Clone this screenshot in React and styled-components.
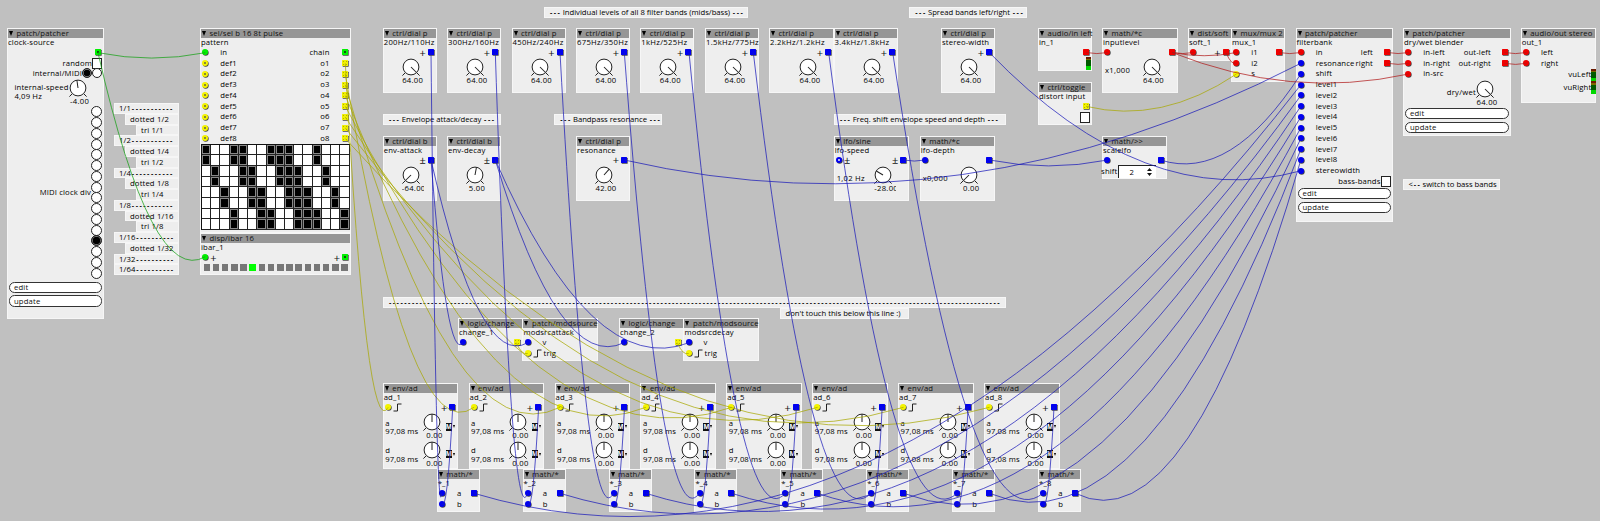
import React from "react";
import styled, { createGlobalStyle, css } from "styled-components";

const Page = createGlobalStyle`
  html, body { margin: 0; background: #c0c0c0; overflow: hidden; }
`;

const HUES = {
  red: { main: "#f00000", wire: "#b01818" },
  blue: { main: "#0000f0", wire: "#1818b8" },
  yellow: { main: "#f4f400", wire: "#a8a800" },
  green: { main: "#00f000", wire: "#10a010" },
};

const Canvas = styled.main`
  position: relative;
  width: 1600px;
  height: 521px;
  overflow: hidden;
  background: #c0c0c0;
  color: #000;
  font: 500 7.7px/9px "Open Sans", "Noto Sans", sans-serif;
  letter-spacing: 0.15px;
  white-space: nowrap;
`;

const Frame = styled.section`
  position: absolute;
  left: ${(p) => p.$x}px;
  top: ${(p) => p.$y}px;
  width: ${(p) => p.$w}px;
  height: ${(p) => p.$h}px;
  box-sizing: border-box;
  border: 1px solid #f6f6f6;
  background: #eeeeee;
  display: flex;
  flex-direction: column;
`;

const Title = styled.header`
  flex: none;
  height: 9.4px;
  display: flex;
  align-items: center;
  gap: 3.5px;
  padding-left: 1px;
  background: #969696;
  color: #111;
`;

const Caret = styled.i`
  flex: none;
  width: 0;
  height: 0;
  border: solid transparent;
  border-width: 5px 2.5px 0;
  border-top-color: #000;
`;

const Name = styled.div`
  flex: none;
  height: 8.7px;
  line-height: 9px;
  letter-spacing: ${(p) => p.$track ?? 0.15}px;
`;

const Row = styled.div`
  flex: none;
  height: 10.75px;
  display: flex;
  align-items: center;
  justify-content: space-between;
  padding: 0 2px 0 0.5px;
`;

const Side = styled.span`
  display: flex;
  align-items: center;
  gap: ${(p) => p.$gap ?? 12}px;
`;

const Port = styled.i`
  flex: none;
  box-sizing: border-box;
  width: 6px;
  height: 6px;
  background: ${(p) => HUES[p.$hue].main};
  box-shadow: 0.7px 0.7px 0 #444;
  border-radius: ${(p) => (p.$out ? "0.5px" : "50%")};
  ${(p) =>
    p.$out &&
    p.$hue === "yellow" &&
    css`
      background: radial-gradient(circle, #b0b000 0.6px, #f0f000 0.9px) 0 0 / 3px 3px;
    `}
  ${(p) =>
    p.$open &&
    css`
      border: 2px solid ${HUES[p.$hue].main};
      background: ${p.$out ? "#105010" : p.$hue === "yellow" ? "#666640" : "#eee"};
    `}
`;

const Sign = styled.b`
  font: 11px/9px "Open Sans", sans-serif;
  color: #111;
  letter-spacing: 0;
`;

const Note = styled.div`
  position: absolute;
  left: ${(p) => p.$x}px;
  top: ${(p) => p.$y}px;
  width: ${(p) => p.$w}px;
  height: 11px;
  box-sizing: border-box;
  padding-left: 4.5px;
  line-height: 9px;
  border: 1px solid #f6f6f6;
  background: #eeeeee;
  letter-spacing: -0.02px;
`;

const Dashes = styled.span`
  font: bold 6.385px/1 "Liberation Mono", monospace;
  letter-spacing: 0;
`;

const DivisionList = styled.div`
  position: absolute;
  left: 114px;
  top: 103px;
  width: 65px;
  display: flex;
  flex-direction: column;
  align-items: stretch;
`;

const Division = styled.div`
  height: 10.75px;
  box-sizing: border-box;
  margin-left: ${(p) => p.$level * 11}px;
  padding-left: 4px;
  line-height: 9px;
  border: 1px solid #f6f6f6;
  background: #eeeeee;
`;

const DialBox = styled.div`
  flex: none;
  width: 24px;
  height: 27px;
  display: flex;
  flex-direction: column;
`;

const Value = styled.span`
  width: 22px;
  margin-left: 3px;
  text-align: center;
  line-height: 9px;
  overflow: hidden;
  letter-spacing: 0.3px;
`;

const ControlRow = styled.div`
  flex: none;
  display: flex;
  align-items: flex-start;
  justify-content: flex-end;
  padding: 0.6px ${(p) => p.$right ?? 13}px 0 2px;
`;

const Reading = styled.span`
  margin: 8px auto 0 0;
  letter-spacing: 0.25px;
`;

const Button = styled.button`
  flex: none;
  display: block;
  height: 11.3px;
  margin: 0 1px 2.4px;
  padding: 0 0 0 4px;
  box-sizing: border-box;
  border: 1px solid #333;
  border-radius: 5.5px;
  background: #fff;
  color: #111;
  font: inherit;
  letter-spacing: inherit;
  text-align: left;
`;

const Actions = styled.div`
  display: flex;
  flex-direction: column;
  margin-top: ${(p) => p.$top}px;
`;

const Check = styled.span`
  flex: none;
  box-sizing: border-box;
  width: 10px;
  height: 11px;
  border: 1px solid #222;
  background: #fff;
`;

const Radio = styled.i`
  flex: none;
  box-sizing: border-box;
  width: ${(p) => p.$size ?? 11}px;
  height: ${(p) => p.$size ?? 11}px;
  border: 1px solid #222;
  border-radius: 50%;
  background: ${(p) => (p.$on ? "#000" : "#fff")};
  box-shadow: ${(p) => (p.$on ? "inset 0 0 0 0.7px #999" : "none")};
`;

const Field = styled.div`
  flex: none;
  display: flex;
  align-items: center;
  justify-content: flex-end;
  height: ${(p) => p.$h ?? 10.75}px;
  padding-right: ${(p) => p.$right ?? 1}px;
`;

const RadioColumn = styled.div`
  display: grid;
  grid-auto-rows: 10.755px;
  place-items: center;
`;

const SpeedText = styled.div`
  display: flex;
  flex-direction: column;
  margin: 4.5px -3px 0 0;
`;

const Steps = styled.div`
  display: grid;
  grid-template-columns: repeat(16, 1fr);
  grid-auto-rows: 10.65px;
  width: 148.5px;
  border: solid #111;
  border-width: 1px 0 0 1px;
  box-sizing: border-box;
`;

const Step = styled.i`
  border: solid #222;
  border-width: 0 1px 1px 0;
  background: ${(p) => (p.$on ? "#000" : "#fff")};
  box-shadow: ${(p) => (p.$on ? "inset 0 0 0 1px #888" : "none")};
`;

const Bar = styled.div`
  display: flex;
  gap: 2.7px;
  padding: 1.2px 0 0 2.5px;
`;

const Lamp = styled.i`
  width: 6.5px;
  height: 7px;
  background: ${(p) => (p.$on ? "#00ff00" : "#777")};
`;

const Meter = styled.i`
  flex: none;
  width: 5px;
  height: 12.6px;
  margin-right: ${(p) => (p.$flush ? -1 : 0)}px;
  background: linear-gradient(#6a1a00 0 2px, #7a6a00 2px 3.5px, #005a00 3.5px 9px, #00d800 9px);
`;

const EnvParam = styled.div`
  flex: none;
  height: 27.75px;
  padding-top: 0.5px;
  box-sizing: border-box;
  display: grid;
  grid-template-columns: 36.8px 24px 1fr;
`;

const EnvText = styled.div`
  display: flex;
  flex-direction: column;
  padding: 5.2px 0 0 1.5px;
  line-height: 8.5px;
  letter-spacing: 0.1px;
`;

const Mod = styled.div`
  display: flex;
  align-items: center;
  gap: 1px;
  margin: 9.4px 0 0 1.3px;
  height: 8px;
`;

const ModKey = styled.b`
  width: 6px;
  height: 8px;
  background: #111;
  color: #fff;
  font: bold 6.5px/8px "Open Sans", sans-serif;
  letter-spacing: 0;
  text-align: center;
`;

const ModCaret = styled(Caret)`
  border-width: 3px 1.7px 0;
`;

const Spinner = styled.div`
  flex: none;
  display: flex;
  align-items: center;
  justify-content: space-between;
  box-sizing: border-box;
  width: 38.5px;
  height: 13px;
  margin-right: 9px;
  padding: 0 3px 0 11px;
  border: solid #222;
  border-width: 1px 0 0 1px;
  background: #fff;
`;

const Wires = styled.svg`
  position: absolute;
  inset: 0;
  pointer-events: none;
  fill: none;
  stroke-width: 1;
`;

function Dial({ value, angle }) {
  return (
    <DialBox>
      <svg width="24" height="18" viewBox="0 0 24 18" fill="none" stroke="#222" strokeWidth="1">
        <path d="M6.3 14.7L3.4 17.6M17.7 14.7L20.6 17.6" />
        <circle cx="12" cy="9" r="7.9" fill="#fff" />
        <path d="M12 9V1.2" transform={`rotate(${angle} 12 9)`} />
      </svg>
      <Value>{value}</Value>
    </DialBox>
  );
}

function StepGlyph() {
  return (
    <svg width="9" height="9" viewBox="0 0 9 9" fill="none" stroke="#222">
      <path d="M0.5 8H4.5V1H8.5" />
    </svg>
  );
}

// Runs of hyphens are ruled lines, so they get fixed-width dashes.
function Ruled({ text }) {
  return text
    .split(/(-{2,})/)
    .map((part, i) => (i % 2 ? <Dashes key={i}>{part}</Dashes> : part));
}

function Node({ x, y = 28, w, h, type, name, track, children }) {
  return (
    <Frame $x={x} $y={y} $w={w} $h={h}>
      <Title>
        <Caret />
        {type}
      </Title>
      <Name $track={track}>{name}</Name>
      {children}
    </Frame>
  );
}

function In({ hue, label, open, sign, step }) {
  return (
    <Side $gap={sign || step ? 2 : 12}>
      <Port $hue={hue} $open={open} style={{ marginLeft: 0.7 }} />
      {sign && <Sign>{sign}</Sign>}
      {step && <StepGlyph />}
      {label && <span>{label}</span>}
    </Side>
  );
}

function Out({ hue, label, open, sign, gap = 10.5 }) {
  return (
    <Side $gap={sign ? 2 : gap}>
      {label && <span>{label}</span>}
      {sign && <Sign>{sign}</Sign>}
      <Port $hue={hue} $open={open} $out />
    </Side>
  );
}

const Empty = () => <span />;

function DialNode({ x, y, w = 54, type = "ctrl/dial p", name, track, value = "64.00", angle = 135, sign = "+" }) {
  return (
    <Node x={x} y={y} w={w} h={65} type={type} name={name} track={track}>
      <Row>
        <Empty />
        <Out hue="blue" sign={sign} />
      </Row>
      <ControlRow>
        <Dial value={value} angle={angle} />
      </ControlRow>
    </Node>
  );
}

const BANDS = [
  [382.7, 54, "200Hz/110Hz"],
  [447, 54, "300Hz/160Hz"],
  [511.5, 54, "450Hz/240Hz"],
  [576, 54, "675Hz/350Hz"],
  [640.3, 54, "1kHz/525Hz"],
  [705, 54, "1.5kHz/775Hz"],
  [769, 65, "2.2kHz/1.2kHz"],
  [833.5, 64.5, "3.4kHz/1.8kHz"],
];

const DIVISIONS = [
  [0, "1/1-----------"],
  [1, "dotted 1/2"],
  [2, "tri 1/1"],
  [0, "1/2-----------"],
  [1, "dotted 1/4"],
  [2, "tri 1/2"],
  [0, "1/4-----------"],
  [1, "dotted 1/8"],
  [2, "tri 1/4"],
  [0, "1/8-----------"],
  [1, "dotted 1/16"],
  [2, "tri 1/8"],
  [0, "1/16----------"],
  [1, "dotted 1/32"],
  [0, "1/32----------"],
  [0, "1/64----------"],
];

const NOTES = [
  [543.7, 6.5, 204.5, "--- Individual levels of all 8 filter bands (mids/bass) ---"],
  [909, 6.5, 118, "--- Spread bands left/right ---"],
  [382.7, 114, 118.5, "--- Envelope attack/decay ---"],
  [554, 114, 108, "--- Bandpass resonance ---"],
  [833.7, 114, 172, "--- Freq. shift envelope speed and depth ---"],
  [1403, 178.5, 97, "<-- switch to bass bands"],
  [382.7, 297, 623, "-".repeat(160)],
  [780, 307.5, 129, "don't touch this below this line :)"],
];

const PITCH = 85.9;
const eight = [0, 1, 2, 3, 4, 5, 6, 7];
const BASE_STEPS = [0, 3, 4, 7, 8, 9, 12];

const row = (n) => 52.6 + 10.75 * n;

const CABLES = [
  ["green", 98, 52.7, 205.3, 52.7],
  ["green", 98, 52.7, 205.3, 256.7],
  ...eight.map((i) => ["yellow", 345.3, row(i + 1), 388.2 + PITCH * i, 407.3]),
  ...[431, 495.3, 560, 624.3, 689, 753.3, 828.7, 892.7].map((x, i) => ["blue", x, 52.5, 441.7 + PITCH * i, 493.3]),
  ...eight.map((i) => ["blue", 452.7 + PITCH * i, 407.3, 441.7 + PITCH * i, 504]),
  ...eight.map((i) => ["blue", 474 + PITCH * i, 493.3, 1300.8, row(i + 3)]),
  ["blue", 431, 160, 463, 342.7],
  ["blue", 431, 160, 527.7, 342.7],
  ["blue", 495.3, 160, 624, 342.7],
  ["blue", 495.3, 160, 689, 342.7],
  ["yellow", 516.3, 342.7, 527.7, 353.5],
  ["yellow", 677.3, 342.7, 688.7, 353.5],
  ["blue", 624.3, 160, 1300.8, 63.3],
  ["blue", 903.7, 160, 925, 160],
  ["blue", 989.5, 160, 1107.7, 160],
  ["blue", 1160.5, 160, 1300.8, 74],
  ["blue", 989.3, 52.5, 1300.8, 170.8],
  ["red", 1086, 52.5, 1107.7, 52.5],
  ["red", 1172, 52.5, 1193.5, 52.5],
  ["red", 1172, 52.5, 1236.5, 52.5],
  ["red", 1172, 52.5, 1408.7, 74],
  ["red", 1226, 52.5, 1236.5, 63.3],
  ["red", 1278.8, 52.5, 1300.8, 52.5],
  ["red", 1387.5, 52.5, 1408.7, 52.5],
  ["red", 1387.5, 63.3, 1408.7, 63.3],
  ["red", 1504.5, 52.5, 1526.5, 52.5],
  ["red", 1504.5, 63.3, 1526.5, 63.3],
  ["yellow", 1086, 106.3, 1236.5, 74],
];

// Cables hang below the lower of their two ends, in proportion to their span.
function cablePath(x1, y1, x2, y2) {
  const sag = Math.max(y1, y2) + 0.1 * (Math.abs(x2 - x1) + Math.abs(y2 - y1));
  return `M${x1} ${y1}Q${(x1 + x2) / 2} ${sag} ${x2} ${y2}`;
}

export default function App() {
  return (
    <Canvas>
      <Page />
      {NOTES.map(([x, y, w, text]) => (
        <Note key={text} $x={x} $y={y} $w={w}><Ruled text={text} /></Note>
      ))}
      <DivisionList>
        {DIVISIONS.map(([level, text]) => (
          <Division key={text} $level={level}><Ruled text={text} /></Division>
        ))}
      </DivisionList>

      <Node x={7} w={97} h={290.5} type="patch/patcher" name="clock-source">
        <Row>
          <Empty />
          <Out hue="green" open />
        </Row>
        <Field>random<Check /></Field>
        <Field $h={9.5}>internal/MIDI<Radio $on $size={10} /><Radio $size={10} /></Field>
        <ControlRow $right={13.5}>
          <SpeedText>
            <span>internal-speed</span>
            <span>4,09 Hz</span>
          </SpeedText>
          <Dial value="-4.00" angle={-8} />
        </ControlRow>
        <Field $h={173.5} $right={1}>
          MIDI clock div
          <RadioColumn>
            {Array.from({ length: 16 }, (_, i) => <Radio key={i} $on={i === 12} />)}
          </RadioColumn>
        </Field>
        <Actions $top={2.5}>
          <Button>edit</Button>
          <Button>update</Button>
        </Actions>
      </Node>

      <Node x={200} w={151} h={205} type="sel/sel b 16 8t pulse" name="pattern">
        <Row>
          <In hue="green" label="in" />
          <Out hue="green" label="chain" gap={12.5} open />
        </Row>
        {eight.map((i) => (
          <Row key={i}>
            <In hue="yellow" label={`def${i + 1}`} open />
            <Out hue="yellow" label={`o${i + 1}`} gap={12.5} />
          </Row>
        ))}
        <Steps>
          {eight.flatMap((r) =>
            Array.from({ length: 16 }, (_, c) => (
              <Step key={`${r}-${c}`} $on={BASE_STEPS.includes(c - Math.floor(r / 2))} />
            ))
          )}
        </Steps>
      </Node>

      <Node x={200} y={232.6} w={151} h={42.5} type="disp/ibar 16" name="ibar_1">
        <Row>
          <In hue="green" sign="+" />
          <Out hue="green" sign="+" open />
        </Row>
        <Bar>
          {Array.from({ length: 16 }, (_, i) => <Lamp key={i} $on={i === 5} />)}
        </Bar>
      </Node>

      {BANDS.map(([x, w, name]) => <DialNode key={name} x={x} w={w} name={name} track={0.3} />)}
      <DialNode x={941} name="stereo-width" />
      <DialNode x={382.7} y={135.5} type="ctrl/dial b" name="env-attack" value="-64.00" angle={-135} sign="±" />
      <DialNode x={447} y={135.5} type="ctrl/dial b" name="env-decay" value="5.00" angle={10.5} sign="±" />
      <DialNode x={576} y={135.5} name="resonance" value="42.00" angle={42} />

      <Node x={833.7} y={135.5} w={75.5} h={65} type="lfo/sine" name="lfo-speed">
        <Row>
          <In hue="blue" open sign="±" />
          <Out hue="blue" sign="±" />
        </Row>
        <ControlRow>
          <Reading>1,02 Hz</Reading>
          <Dial value="-28.00" angle={-59} />
        </ControlRow>
      </Node>
      <Node x={919.7} y={135.5} w={75.5} h={65} type="math/*c" name="lfo-depth">
        <Row>
          <In hue="blue" />
          <Out hue="blue" />
        </Row>
        <ControlRow>
          <Reading>x0,000</Reading>
          <Dial value="0.00" angle={-135} />
        </ControlRow>
      </Node>

      <Node x={1038} w={54} h={43} type="audio/in left" name="in_1">
        <Row>
          <Empty />
          <Out hue="red" />
        </Row>
        <Field $h={11.5} $right={0}><Meter /></Field>
      </Node>
      <Node x={1038} y={82} w={54} h={43} type="ctrl/toggle" name="distort input">
        <Row>
          <Empty />
          <Out hue="yellow" />
        </Row>
        <Field><Check /></Field>
      </Node>
      <Node x={1102} w={75.5} h={65} type="math/*c" name="inputlevel">
        <Row>
          <In hue="red" />
          <Out hue="red" />
        </Row>
        <ControlRow>
          <Reading>x1,000</Reading>
          <Dial value="64.00" angle={135} />
        </ControlRow>
      </Node>
      <Node x={1188} w={43.5} h={32.7} type="dist/soft" name="soft_1">
        <Row>
          <In hue="red" />
          <Out hue="red" sign="+" />
        </Row>
      </Node>
      <Node x={1231} w={54} h={54} type="mux/mux 2" name="mux_1">
        <Row>
          <In hue="red" label="i1" />
          <Out hue="red" />
        </Row>
        <Row><In hue="red" label="i2" /></Row>
        <Row><In hue="yellow" label="s" /></Row>
      </Node>
      <Node x={1102} y={135.5} w={65} h={43.3} type="math/>>" name="scalelfo">
        <Row>
          <In hue="blue" />
          <Out hue="blue" />
        </Row>
        <Field $h={12.5}>
          shift
          <Spinner>
            <span>2</span>
            <svg width="7" height="8" viewBox="0 0 7 8" fill="#111">
              <path d="M3.5 0L6 3H1zM3.5 8L1 5H6z" />
            </svg>
          </Spinner>
        </Field>
      </Node>

      <Node x={1295.5} w={97} h={193.5} type="patch/patcher" name="filterbank">
        <Row>
          <In hue="red" label="in" />
          <Out hue="red" label="left" />
        </Row>
        <Row>
          <In hue="blue" label="resonance" />
          <Out hue="red" label="right" />
        </Row>
        <Row><In hue="blue" label="shift" /></Row>
        {eight.map((i) => <Row key={i}><In hue="blue" label={`level${i + 1}`} /></Row>)}
        <Row><In hue="blue" label="stereowidth" /></Row>
        <Field>bass-bands<Check /></Field>
        <Actions $top={1}>
          <Button>edit</Button>
          <Button>update</Button>
        </Actions>
      </Node>

      <Node x={1403} w={107.5} h={107.7} type="patch/patcher" name="dry/wet blender">
        <Row>
          <In hue="red" label="in-left" />
          <Out hue="red" label="out-left" />
        </Row>
        <Row>
          <In hue="red" label="in-right" />
          <Out hue="red" label="out-right" />
        </Row>
        <Row><In hue="red" label="in-src" /></Row>
        <ControlRow $right={12.5}>
          <Reading style={{ marginLeft: "auto", marginRight: -3 }}>dry/wet</Reading>
          <Dial value="64.00" angle={135} />
        </ControlRow>
        <Actions $top={1}>
          <Button>edit</Button>
          <Button>update</Button>
        </Actions>
      </Node>

      <Node x={1520.7} w={75.7} h={75} type="audio/out stereo" name="out_1">
        <Row><In hue="red" label="left" /></Row>
        <Row><In hue="red" label="right" /></Row>
        <Field $h={12.5} $right={0}>vuLeft<Meter $flush /></Field>
        <Field $h={12.5} $right={0}>vuRight<Meter $flush /></Field>
      </Node>

      {[[458, "1", "attack"], [619, "2", "decay"]].map(([x, n, kind]) => (
        <React.Fragment key={n}>
          <Node x={x} y={318} w={64.5} h={32.7} type="logic/change" name={`change_${n}`}>
            <Row>
              <In hue="blue" />
              <Out hue="yellow" />
            </Row>
          </Node>
          <Node x={x + 64.4} y={318} w={75.5} h={43.3} type="patch/modsource" name={`modsrc${kind}`}>
            <Row><In hue="blue" label="v" /></Row>
            <Row><In hue="yellow" label="trig" step /></Row>
          </Node>
        </React.Fragment>
      ))}

      {eight.map((i) => (
        <Node key={i} x={382.7 + PITCH * i} y={383} w={75.5} h={86} type="env/ad" name={`ad_${i + 1}`}>
          <Row>
            <In hue="yellow" step />
            <Out hue="blue" sign="+" />
          </Row>
          {["a", "d"].map((param) => (
            <EnvParam key={param}>
              <EnvText>
                <span>{param}</span>
                <span>97,08 ms</span>
              </EnvText>
              <Dial value="0.00" angle={0} />
              <Mod>
                <ModKey>M</ModKey>
                <ModCaret />
              </Mod>
            </EnvParam>
          ))}
        </Node>
      ))}
      {eight.map((i) => (
        <Node key={i} x={436.7 + PITCH * i} y={469} w={43} h={42.7} type="math/*" name={`*_${i + 1}`}>
          <Row>
            <In hue="blue" label="a" />
            <Out hue="blue" />
          </Row>
          <Row><In hue="blue" label="b" /></Row>
        </Node>
      ))}

      <Wires width="1600" height="521" viewBox="0 0 1600 521">
        {CABLES.map(([hue, ...ends], i) => (
          <path key={i} d={cablePath(...ends)} stroke={HUES[hue].wire} strokeOpacity="0.72" />
        ))}
      </Wires>
    </Canvas>
  );
}
